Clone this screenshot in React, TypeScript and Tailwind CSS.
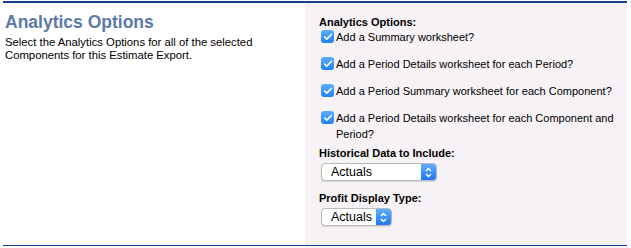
import { Check } from 'lucide-react';

const OPTIONS = [
  'Add a Summary worksheet?',
  'Add a Period Details worksheet for each Period?',
  'Add a Period Summary worksheet for each Component?',
  'Add a Period Details worksheet for each Component and Period?',
];

function MacCheckbox() {
  return (
    <span className="mt-[1px] flex h-[13px] w-[13px] flex-shrink-0 items-center justify-center rounded-[3px] bg-gradient-to-b from-[#5ab0fd] to-[#1f7ef5]">
      <Check className="h-[10px] w-[10px] text-white" strokeWidth={4} />
    </span>
  );
}

function MacSelect({ value, width }: { value: string; width: string }) {
  return (
    <div
      className={`flex h-[18px] ${width} items-stretch overflow-hidden rounded-[4px] border border-[#b9b9b9] bg-white shadow-[0_1px_1px_rgba(0,0,0,0.12)]`}
    >
      <span className="flex flex-1 items-center pl-[9px] text-[12.5px] text-black">{value}</span>
      <span className="flex w-[15px] items-center justify-center bg-gradient-to-b from-[#5eaefc] to-[#1c78f2]">
        <svg width="7" height="11" viewBox="0 0 7 11" fill="none" stroke="white" strokeWidth="1.4">
          <path d="M1 4 L3.5 1.5 L6 4" />
          <path d="M1 7 L3.5 9.5 L6 7" />
        </svg>
      </span>
    </div>
  );
}

export default function App() {
  return (
    <div className="h-[248px] w-[631px] bg-white pl-[3px] pr-[4px] pt-[1px] font-['Liberation_Sans',sans-serif]">
      <div className="flex h-[244px] border-t-2 border-[#163e8f]">
        <div className="w-[302px] pl-[2px] pt-[7px]">
          <h1 className="text-[17.5px] font-bold leading-[24px] text-[#5b7aa7]">Analytics Options</h1>
          <p className="mt-[2px] text-[11.3px] leading-[13px] text-black">
            Select the Analytics Options for all of the selected Components for this Estimate Export.
          </p>
        </div>
        <div className="flex-1 bg-[#f6f2f5] pl-[14px] pr-[12px] pt-[12px] text-[11px] text-black">
          <div className="font-bold leading-[14px]">Analytics Options:</div>
          <div className="flex flex-col gap-[11px]">
            {OPTIONS.map((o) => (
              <label key={o} className="flex items-start gap-[2px] pl-[2px] leading-[16px]">
                <MacCheckbox />
                <span>{o}</span>
              </label>
            ))}
          </div>
          <div className="mt-[4px] font-bold leading-[14px]">Historical Data to Include:</div>
          <div className="mt-[3px] pl-[2px]">
            <MacSelect value="Actuals" width="w-[116px]" />
          </div>
          <div className="mt-[10px] font-bold leading-[14px]">Profit Display Type:</div>
          <div className="mt-[3px] pl-[2px]">
            <MacSelect value="Actuals" width="w-[71px]" />
          </div>
        </div>
      </div>
      <div className="flex h-[3px] border-t border-[#163e8f]">
        <div className="w-[302px]" />
        <div className="flex-1 bg-[#f6f2f5]" />
      </div>
    </div>
  );
}
